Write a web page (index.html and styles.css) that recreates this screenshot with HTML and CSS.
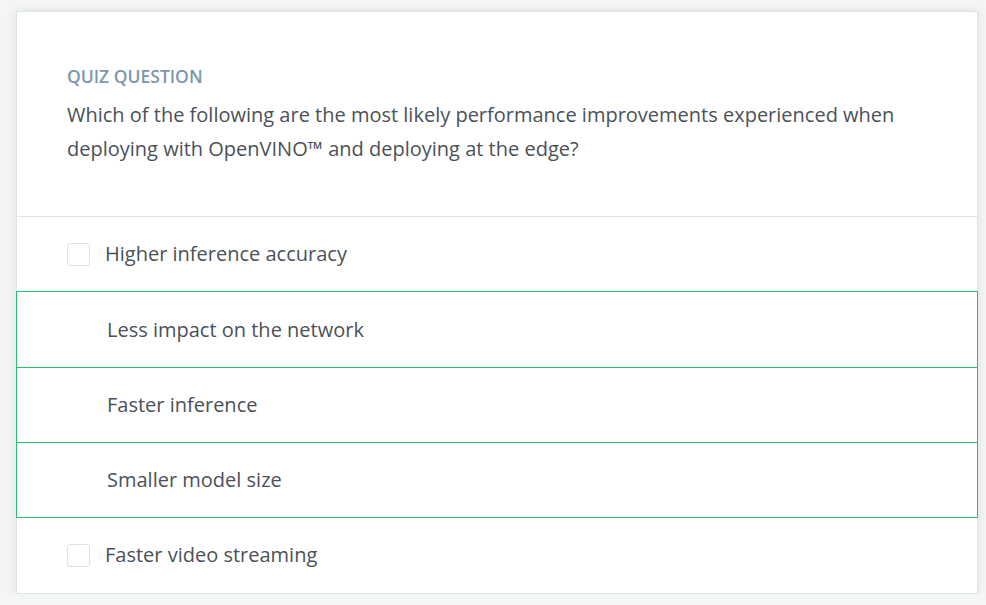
FILE: index.html
```html
<!DOCTYPE html>
<html>
<head>
<meta charset="utf-8">
<link rel="stylesheet" href="styles.css">
</head>
<body>
<div class="card">
  <div class="header">
    <div class="label">QUIZ QUESTION</div>
    <div class="question">Which of the following are the most likely performance improvements experienced when deploying with OpenVINO™ and deploying at the edge?</div>
  </div>
  <div class="options">
    <div class="option"><span class="box"></span><span class="text">Higher inference accuracy</span></div>
    <div class="option selected first-selected"><span class="text">Less impact on the network</span></div>
    <div class="option selected"><span class="text">Faster inference</span></div>
    <div class="option selected"><span class="text">Smaller model size</span></div>
    <div class="option"><span class="box"></span><span class="text">Faster video streaming</span></div>
  </div>
</div>
</body>
</html>
```
FILE: styles.css
```css
html, body {
  margin: 0;
  padding: 0;
}
body {
  background: #f4f5f5;
  font-family: "Open Sans", "Liberation Sans", sans-serif;
  color: #4b5158;
}
.card {
  box-sizing: border-box;
  width: 962px;
  margin: 11px 0 0 16px;
  background: #fff;
  border: 1px solid #dbe2e8;
  box-shadow: 0 0 10px rgba(0, 0, 0, 0.09);
}
.header {
  padding: 52px 50px 50px 50px;
  border-bottom: 1px solid #dbe2e8;
}
.label {
  font-size: 17.5px;
  line-height: 24px;
  font-weight: 600;
  color: #7d97ad;
}
.question {
  margin-top: 10px;
  font-size: 20px;
  line-height: 34px;
  color: #4b5158;
}
.options {
  display: flex;
  flex-direction: column;
}
.option {
  box-sizing: border-box;
  height: 76px;
  margin: -1px -1px 0 -1px;
  border: 1px solid transparent;
  display: flex;
  align-items: center;
  padding-left: 50px;
  font-size: 20px;
  color: #4b5158;
}
.option.selected {
  border-color: #2bbd6e;
  padding-left: 90px;
}
.option.first-selected {
  height: 77px;
  padding-top: 1px;
}
.box {
  box-sizing: border-box;
  width: 23px;
  height: 23px;
  border: 1px solid #dbe2e8;
  border-radius: 3px;
  margin-right: 15px;
  flex: none;
}
.text {
  line-height: 26px;
}
```
